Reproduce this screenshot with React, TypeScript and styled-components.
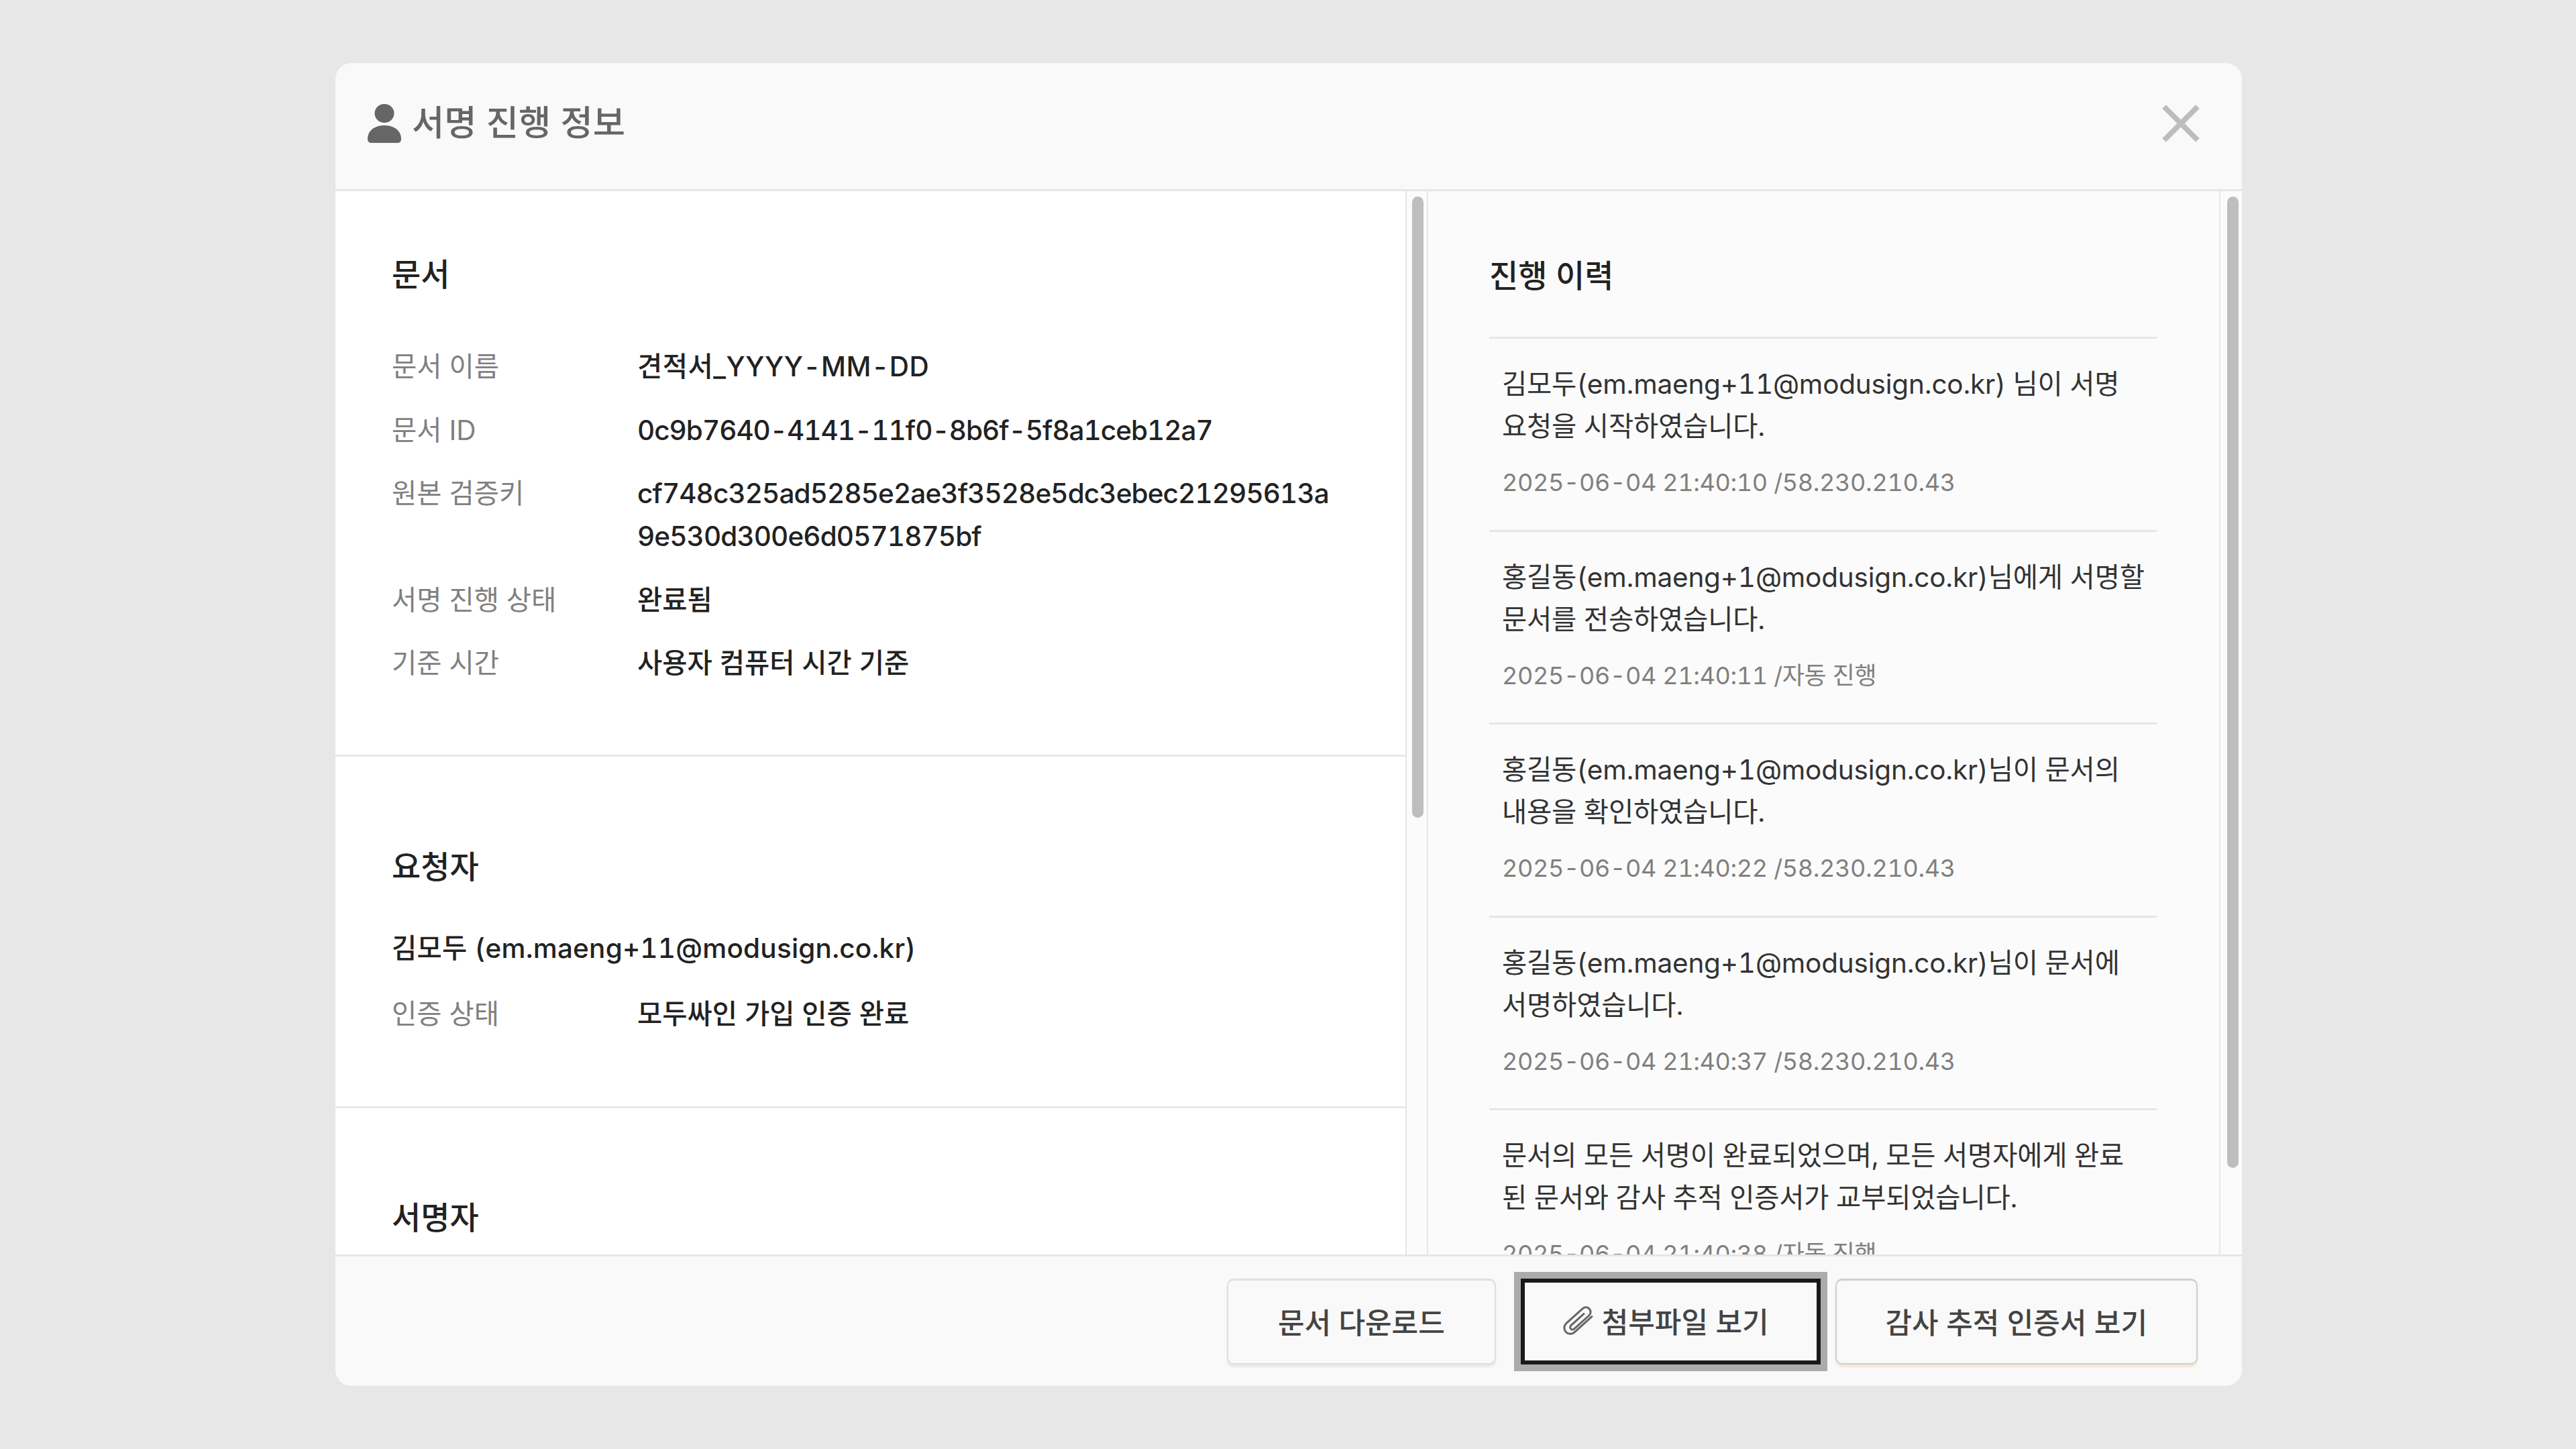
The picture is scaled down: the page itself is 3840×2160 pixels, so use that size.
import styled, { createGlobalStyle } from 'styled-components'

const GlobalStyle = createGlobalStyle`
  html, body {
    margin: 0;
    padding: 0;
    background: #e7e7e7;
  }
  * {
    box-sizing: border-box;
  }
`

const Page = styled.div`
  width: 3840px;
  height: 2160px;
  padding: 94px 498px 94px 500px;
  font-family: Inter, 'Noto Sans CJK KR', sans-serif;
  font-variant-numeric: tabular-nums;
`

const Modal = styled.div`
  height: 100%;
  display: flex;
  flex-direction: column;
  border-radius: 24px;
  overflow: hidden;
  background: #f9f9f9;
`

const Header = styled.header`
  flex: none;
  height: 191px;
  padding: 0 62px 8px 48px;
  display: flex;
  align-items: center;
  justify-content: space-between;
  border-bottom: 3px solid #e6e6e6;
`

const HeaderTitle = styled.h2`
  margin: 0;
  display: flex;
  align-items: center;
  gap: 16px;
  font-size: 52.5px;
  line-height: 66px;
  font-weight: 500;
  color: #666;
`

const TitleText = styled.span`
  margin-top: -2px;
`

const CloseButton = styled.button`
  padding: 0;
  border: 0;
  background: none;
  display: flex;
`

const Body = styled.div`
  flex: 1;
  min-height: 0;
  display: flex;
`

const LeftPane = styled.div`
  width: 1595px;
  flex: none;
  overflow: hidden;
  background: #fff;
`

const RightPane = styled.div`
  flex: 1;
  min-width: 0;
  overflow: hidden;
  padding: 96px 93px 0 91px;
  background: #fbfbfb;
`

const Track = styled.div<{ $left?: boolean }>`
  flex: none;
  width: 34px;
  padding: 8px 5px 0 ${props => (props.$left ? '8px' : '10px')};
  background: #fbfbfb;
  border-left: 2px solid #e6e6e6;
  border-right: ${props => (props.$left ? '2px solid #e6e6e6' : '0')};
`

const Thumb = styled.div<{ $height: number }>`
  height: ${props => props.$height}px;
  border-radius: 10px;
  background: #bebebe;
`

const Section = styled.section<{ $top: number; $height?: number }>`
  padding: ${props => props.$top}px 100px 0 84px;
  height: ${props => (props.$height ? `${props.$height}px` : 'auto')};
  border-bottom: ${props => (props.$height ? '3px solid #e8e8e8' : '0')};
`

const SectionTitle = styled.h3<{ $gap: number }>`
  margin: 0 0 ${props => props.$gap}px;
  font-size: 47px;
  line-height: 60px;
  font-weight: 500;
  color: #222;
`

const Rows = styled.div`
  display: flex;
  flex-direction: column;
  gap: 30.5px;
`

const Row = styled.div`
  display: flex;
  font-size: 40.5px;
  line-height: 64px;
`

const Label = styled.div`
  flex: none;
  width: 366px;
  color: #808080;
`

const Value = styled.div<{ $tracking?: number }>`
  flex: 1;
  min-width: 0;
  font-weight: 500;
  color: #222;
  letter-spacing: ${props => props.$tracking ?? 0}px;
  overflow-wrap: anywhere;
`

const Requester = styled.div`
  margin-bottom: 34px;
  font-size: 40.5px;
  line-height: 64px;
  font-weight: 500;
  letter-spacing: 0.2px;
  color: #222;
`

const HistoryItem = styled.div`
  padding: 36px 12px 0 19px;
  height: 287.5px;
  border-top: 3px solid #e6e6e6;
`

const HistoryText = styled.div`
  font-size: 40.5px;
  line-height: 63px;
  letter-spacing: -0.2px;
  color: #333;
`

const HistoryMeta = styled.div`
  margin-top: 22px;
  font-size: 36px;
  line-height: 60px;
  letter-spacing: -0.35px;
  color: #808080;
`

const Footer = styled.footer`
  flex: none;
  height: 196px;
  padding: 33px 66px 0 0;
  display: flex;
  justify-content: flex-end;
  gap: 22px;
  border-top: 3px solid #e6e6e6;
`

const Button = styled.button<{ $warm?: boolean }>`
  height: 128px;
  padding: 0 ${props => (props.$warm ? '73px' : '74px')} 4px;
  display: flex;
  align-items: center;
  font-family: inherit;
  font-size: 43px;
  font-weight: 500;
  color: #444;
  background: #f9f9f9;
  border: 2px solid ${props => (props.$warm ? '#cfcfcf' : '#dfdfdf')};
  border-top-width: 3px;
  border-radius: 10px;
  box-shadow: 0 4px 3px ${props => (props.$warm ? '#f2e8d0' : '#e8e8e8')};
`

const FocusedButton = styled(Button)`
  margin-left: 15px;
  padding: 0 71px 4px 57px;
  gap: 11px;
  border: 6px solid #191919;
  border-radius: 0;
  box-shadow: 0 0 0 10px #ababab;
`

const PersonIcon = () => (
  <svg width="50" height="58" viewBox="0 0 50 58" fill="#666">
    <ellipse cx="25" cy="14" rx="14.5" ry="14" />
    <path d="M0 52C0 40 10 32 25 32s25 8 25 20c0 4-2 6-6 6H6c-4 0-6-2-6-6z" />
  </svg>
)

const CloseIcon = () => (
  <svg width="58" height="58" viewBox="0 0 58 58" stroke="#bdbdbd" strokeWidth="8" fill="none">
    <path d="M4 4l50 50M54 4L4 54" />
  </svg>
)

const ClipIcon = () => (
  <svg width="47" height="44" viewBox="0 0 47 44" fill="none" stroke="#666" strokeWidth="3" strokeLinecap="round">
    <g transform="translate(23.5 22) rotate(-42) translate(-28 -10)">
      <path d="M46 19H11a9 9 0 0 1 0-18H44a7 7 0 0 1 0 14H14a3.5 3.5 0 0 1 0-7H40" />
    </g>
  </svg>
)

const history = [
  {
    text: '김모두(em.maeng+11@modusign.co.kr) 님이 서명 요청을 시작하였습니다.',
    meta: '2025-06-04 21:40:10 /58.230.210.43'
  },
  {
    text: '홍길동(em.maeng+1@modusign.co.kr)님에게 서명할 문서를 전송하였습니다.',
    meta: '2025-06-04 21:40:11 /자동 진행'
  },
  {
    text: '홍길동(em.maeng+1@modusign.co.kr)님이 문서의 내용을 확인하였습니다.',
    meta: '2025-06-04 21:40:22 /58.230.210.43'
  },
  {
    text: '홍길동(em.maeng+1@modusign.co.kr)님이 문서에 서명하였습니다.',
    meta: '2025-06-04 21:40:37 /58.230.210.43'
  },
  {
    text: '문서의 모든 서명이 완료되었으며, 모든 서명자에게 완료된 문서와 감사 추적 인증서가 교부되었습니다.',
    meta: '2025-06-04 21:40:38 /자동 진행'
  }
]

export default function App() {
  return (
    <Page>
      <GlobalStyle />
      <Modal>
        <Header>
          <HeaderTitle>
            <PersonIcon />
            <TitleText>서명 진행 정보</TitleText>
          </HeaderTitle>
          <CloseButton>
            <CloseIcon />
          </CloseButton>
        </Header>
        <Body>
          <LeftPane>
            <Section $top={94} $height={843}>
              <SectionTitle $gap={76}>문서</SectionTitle>
              <Rows>
                <Row>
                  <Label>문서 이름</Label>
                  <Value $tracking={0.5}>견적서_YYYY-MM-DD</Value>
                </Row>
                <Row>
                  <Label>문서 ID</Label>
                  <Value $tracking={-1}>0c9b7640-4141-11f0-8b6f-5f8a1ceb12a7</Value>
                </Row>
                <Row>
                  <Label>원본 검증키</Label>
                  <Value $tracking={-0.9}>cf748c325ad5285e2ae3f3528e5dc3ebec21295613a9e530d300e6d0571875bf</Value>
                </Row>
                <Row>
                  <Label>서명 진행 상태</Label>
                  <Value>완료됨</Value>
                </Row>
                <Row>
                  <Label>기준 시간</Label>
                  <Value>사용자 컴퓨터 시간 기준</Value>
                </Row>
              </Rows>
            </Section>
            <Section $top={134} $height={524}>
              <SectionTitle $gap={60}>요청자</SectionTitle>
              <Requester>김모두 (em.maeng+11@modusign.co.kr)</Requester>
              <Row>
                <Label>인증 상태</Label>
                <Value>모두싸인 가입 인증 완료</Value>
              </Row>
            </Section>
            <Section $top={133}>
              <SectionTitle $gap={0}>서명자</SectionTitle>
            </Section>
          </LeftPane>
          <Track $left>
            <Thumb $height={926} />
          </Track>
          <RightPane>
            <SectionTitle $gap={61}>진행 이력</SectionTitle>
            {history.map(item => (
              <HistoryItem key={item.meta}>
                <HistoryText>{item.text}</HistoryText>
                <HistoryMeta>{item.meta}</HistoryMeta>
              </HistoryItem>
            ))}
          </RightPane>
          <Track>
            <Thumb $height={1448} />
          </Track>
        </Body>
        <Footer>
          <Button>문서 다운로드</Button>
          <FocusedButton>
            <ClipIcon />
            첨부파일 보기
          </FocusedButton>
          <Button $warm>감사 추적 인증서 보기</Button>
        </Footer>
      </Modal>
    </Page>
  )
}
